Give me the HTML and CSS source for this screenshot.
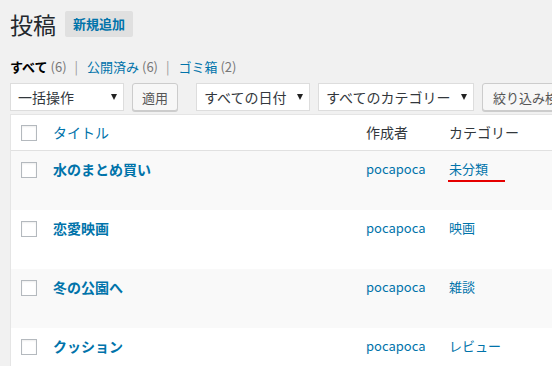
FILE: index.html
```html
<!DOCTYPE html>
<html lang="ja">
<head>
    <meta charset="UTF-8">
    <meta name="viewport" content="width=device-width, initial-scale=1.0">
    <title>投稿一覧</title>
    <link rel="stylesheet" href="styles.css">
</head>
<body>
    <div class="wrap">
        <div class="page-head">
            <h1>投稿</h1>
            <a class="add-new" href="#">新規追加</a>
        </div>

        <ul class="subsubsub">
            <li><a class="current" href="#">すべて <span class="count">(6)</span></a></li>
            <li class="sep">|</li>
            <li><a href="#">公開済み <span class="count">(6)</span></a></li>
            <li class="sep">|</li>
            <li><a href="#">ゴミ箱 <span class="count">(2)</span></a></li>
        </ul>

        <div class="tablenav">
            <div class="select w-bulk"><span>一括操作</span><i class="arrow"></i></div>
            <button class="button w-apply">適用</button>
            <div class="select w-date push"><span>すべての日付</span><i class="arrow"></i></div>
            <div class="select w-cat"><span>すべてのカテゴリー</span><i class="arrow"></i></div>
            <button class="button">絞り込み検索</button>
        </div>

        <table class="posts">
            <thead>
                <tr>
                    <th class="col-cb"><span class="cb"></span></th>
                    <th class="col-title"><a href="#">タイトル</a></th>
                    <th class="col-author">作成者</th>
                    <th class="col-cat">カテゴリー</th>
                </tr>
            </thead>
            <tbody>
                <tr class="alt">
                    <td class="col-cb"><span class="cb"></span></td>
                    <td class="col-title"><a href="#">水のまとめ買い</a></td>
                    <td><a href="#">pocapoca</a></td>
                    <td><a class="marked" href="#">未分類</a></td>
                </tr>
                <tr>
                    <td class="col-cb"><span class="cb"></span></td>
                    <td class="col-title"><a href="#">恋愛映画</a></td>
                    <td><a href="#">pocapoca</a></td>
                    <td><a href="#">映画</a></td>
                </tr>
                <tr class="alt">
                    <td class="col-cb"><span class="cb"></span></td>
                    <td class="col-title"><a href="#">冬の公園へ</a></td>
                    <td><a href="#">pocapoca</a></td>
                    <td><a href="#">雑談</a></td>
                </tr>
                <tr>
                    <td class="col-cb"><span class="cb"></span></td>
                    <td class="col-title"><a href="#">クッション</a></td>
                    <td><a href="#">pocapoca</a></td>
                    <td><a href="#">レビュー</a></td>
                </tr>
            </tbody>
        </table>
    </div>
</body>
</html>
```

FILE: styles.css
```css
html, body {
    overflow: hidden;
}
body {
    margin: 0;
    background: #f1f1f1;
    color: #444;
    font-family: "Noto Sans CJK JP", "Noto Sans", sans-serif;
    font-size: 13px;
}
a {
    color: #0073aa;
    text-decoration: none;
}
.wrap {
    width: 760px;
    padding-left: 10px;
}
.page-head {
    display: flex;
    align-items: center;
    gap: 9px;
    padding-top: 11px;
}
h1 {
    margin: 0;
    font-size: 23px;
    font-weight: 400;
    line-height: 26px;
    color: #23282d;
}
.add-new {
    background: #e0e0e0;
    border-radius: 2px;
    padding: 0 8px;
    height: 26px;
    line-height: 26px;
    font-weight: 700;
}
.subsubsub {
    list-style: none;
    margin: 20px 0 0;
    padding: 0;
    display: flex;
    line-height: 20px;
    color: #999;
}
.subsubsub .sep {
    margin: 0 9px 0 8px;
}
.subsubsub a.current {
    color: #000;
    font-weight: 700;
}
.count {
    color: #777;
    font-weight: 400;
}
.tablenav {
    display: flex;
    gap: 8px;
    margin-top: 6px;
    height: 28px;
}
.select {
    box-sizing: border-box;
    height: 28px;
    background: #fff;
    border: 1px solid #ddd;
    display: flex;
    align-items: center;
    justify-content: space-between;
    padding: 0 6px 0 7px;
    font-size: 14px;
    color: #32373c;
}
.w-bulk { width: 114px; }
.w-date { width: 114px; }
.w-cat { width: 156px; }
.push { margin-left: 10px; }
.arrow {
    width: 0;
    height: 0;
    border-left: 3px solid transparent;
    border-right: 3px solid transparent;
    border-top: 6px solid #222;
}
.button {
    box-sizing: border-box;
    height: 28px;
    padding: 0 10px;
    background: #f7f7f7;
    border: 1px solid #ccc;
    border-radius: 3px;
    box-shadow: 0 1px 0 #ccc;
    color: #555;
    font-family: inherit;
    font-size: 13px;
    white-space: nowrap;
}
.w-apply {
    width: 46px;
    padding: 0;
}
.posts {
    margin-top: 3px;
    width: 700px;
    table-layout: fixed;
    border-collapse: separate;
    border-spacing: 0;
    border: 1px solid #e5e5e5;
    background: #fff;
}
.posts th, .posts td {
    text-align: left;
    vertical-align: top;
    padding: 8px 10px;
    line-height: 19px;
}
.posts th {
    font-weight: 400;
    font-size: 14px;
    color: #32373c;
    border-bottom: 1px solid #e1e1e1;
}
.posts td {
    line-height: 20px;
}
.posts tbody tr {
    height: 59px;
}
.posts tr.alt {
    background: #f9f9f9;
}
.posts .col-cb {
    width: 22px;
    padding: 10px 0 0 10px;
}
.posts td.col-cb {
    padding-top: 11px;
}
.col-title { width: 293px; }
.col-author { width: 63px; }
.col-cat { width: 280px; }
.posts td.col-title a {
    font-size: 14px;
    font-weight: 700;
}
.cb {
    display: block;
    box-sizing: border-box;
    width: 16px;
    height: 16px;
    border: 1px solid #b4b9be;
    background: #fff;
    box-shadow: inset 0 1px 2px rgba(0, 0, 0, 0.07);
}
.marked {
    position: relative;
}
.marked::after {
    content: "";
    position: absolute;
    left: -1px;
    top: 21px;
    width: 57px;
    height: 2px;
    background: #e60000;
}
```
